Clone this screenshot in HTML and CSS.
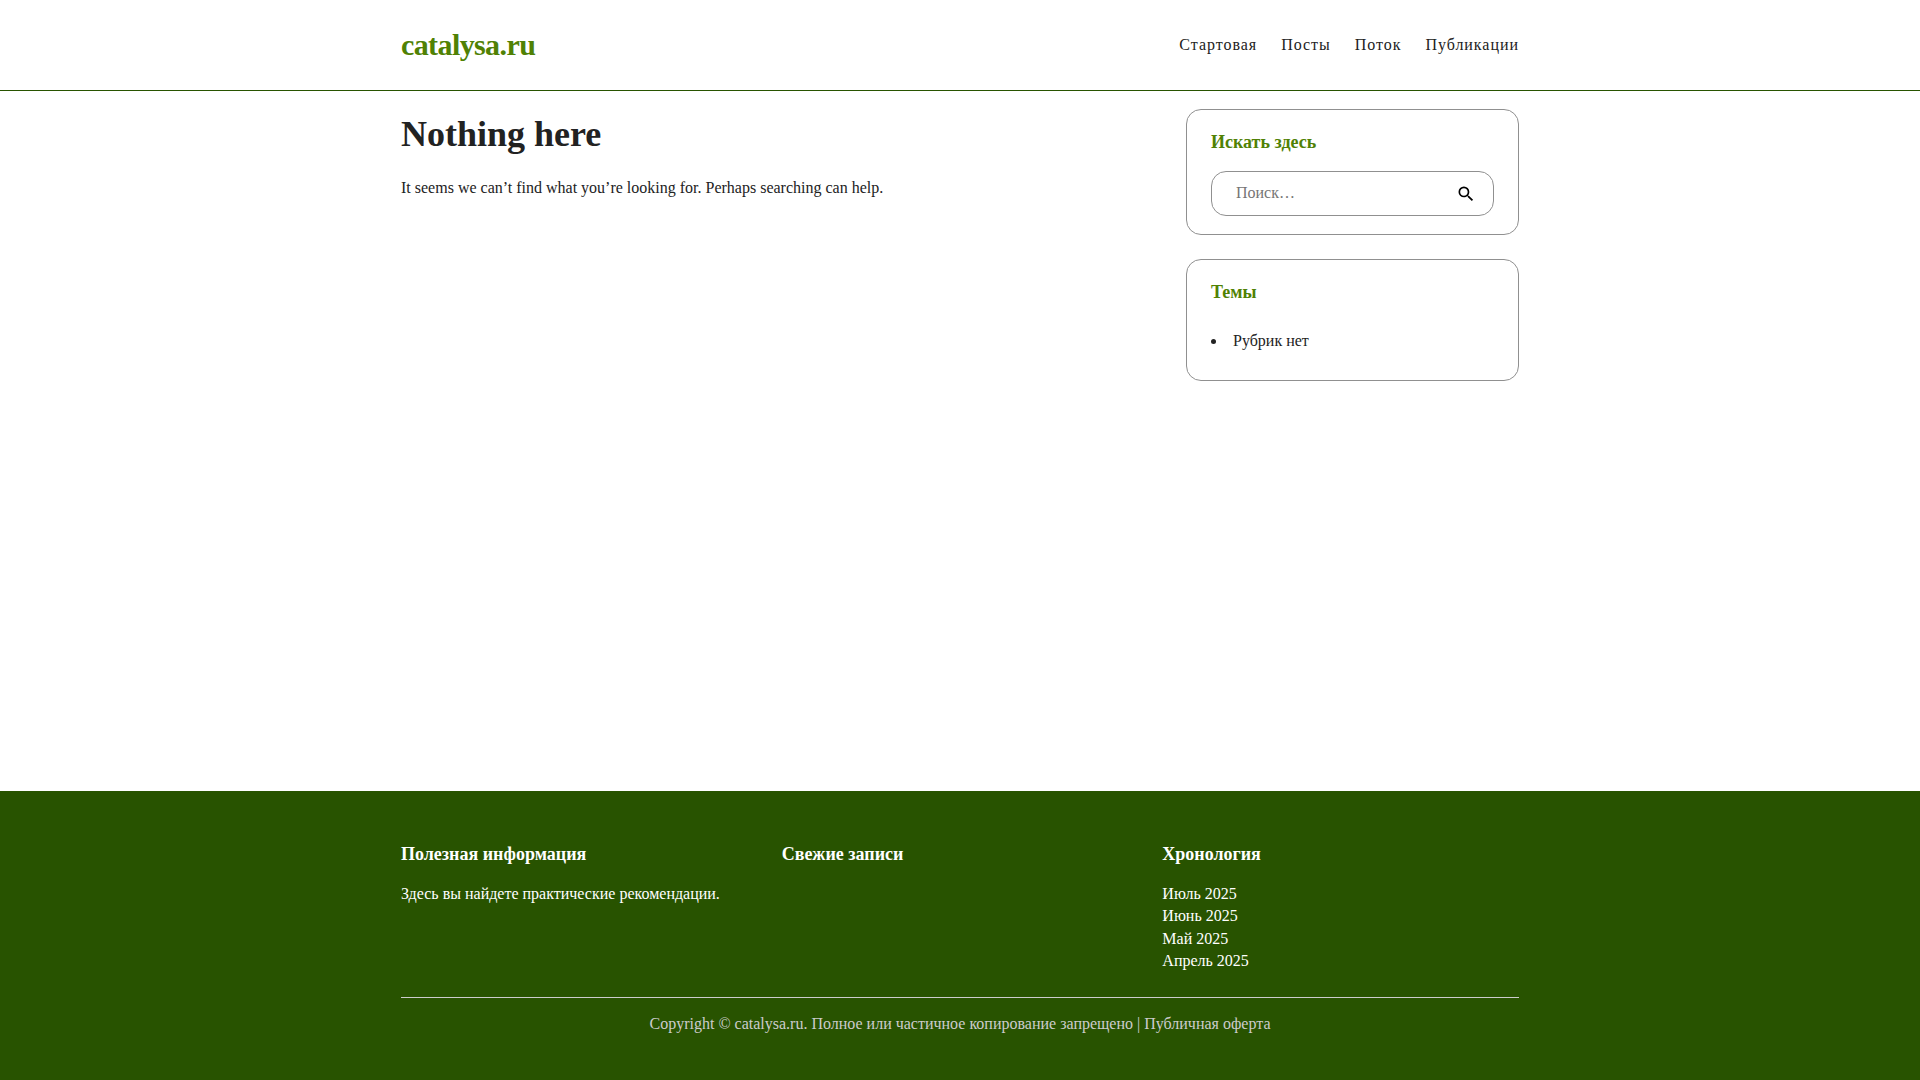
FILE: index.html
```html
<!DOCTYPE html>
<html lang="ru">

<head>
  <meta charset="UTF-8" />
  <meta name="viewport" content="width=device-width, initial-scale=1.0" />
  <link rel="stylesheet" href="styles.css">
  <title>catalysa.ru</title>
</head>

<body>
  <header class="header">
    <div class="container header-container">
      <a class="logo" href="/">catalysa.ru</a>
      <nav class="menu">
        <a href="/">Стартовая</a>
        <a href="/posts">Посты</a>
        <a href="/feed">Поток</a>
        <a href="/publications">Публикации</a>
      </nav>
    </div>
  </header>

  <div class="container content">
    <main class="main">
      <h1>Nothing here</h1>
      <p>It seems we can’t find what you’re looking for. Perhaps searching can help.</p>
    </main>

    <aside class="sidebar">
      <section class="widget">
        <h2><label for="search">Искать здесь</label></h2>
        <form class="search-form">
          <input class="search-field" id="search" name="s" type="text" placeholder="Поиск…" autocomplete="off" />
          <button class="search-submit" aria-label="Поиск">
            <svg width="20" height="20" viewBox="0 0 24 24">
              <path d="M15.5 14h-.79l-.28-.27A6.471 6.471 0 0 0 16 9.5 6.5 6.5 0 1 0 9.5 16c1.61 0 3.09-.59 4.23-1.57l.27.28v.79l5 4.99L20.49 19l-4.99-5zm-6 0C7.01 14 5 11.99 5 9.5S7.01 5 9.5 5 14 7.01 14 9.5 11.99 14 9.5 14z" />
            </svg>
          </button>
        </form>
      </section>

      <section class="widget">
        <h2>Темы</h2>
        <ul class="topics">
          <li>Рубрик нет</li>
        </ul>
      </section>
    </aside>
  </div>

  <footer class="footer">
    <div class="container">
      <div class="footer-columns">
        <section>
          <h2>Полезная информация</h2>
          <p>Здесь вы найдете практические рекомендации.</p>
        </section>
        <section>
          <h2>Свежие записи</h2>
        </section>
        <section>
          <h2>Хронология</h2>
          <ul class="archive">
            <li><a href="/2025/07">Июль 2025</a></li>
            <li><a href="/2025/06">Июнь 2025</a></li>
            <li><a href="/2025/05">Май 2025</a></li>
            <li><a href="/2025/04">Апрель 2025</a></li>
          </ul>
        </section>
      </div>
      <div class="copyright">
        Copyright © catalysa.ru. Полное или частичное копирование запрещено | <a href="/offer">Публичная оферта</a>
      </div>
    </div>
  </footer>
</body>

</html>
```

FILE: styles.css
```css
* {
  margin: 0;
  padding: 0;
  box-sizing: border-box;
}

body {
  display: flex;
  flex-direction: column;
  min-height: 100vh;
  font-family: "Liberation Serif", "Times New Roman", serif;
  font-size: 16px;
  line-height: 1.4;
  color: #222;
  background-color: #fff;
}

a {
  color: inherit;
  text-decoration: none;
}

h2 {
  font-size: 18px;
}

.container {
  width: 100%;
  max-width: 1166px;
  margin: 0 auto;
  padding: 0 24px;
}

.header {
  padding: 24px 0;
  border-bottom: 1px solid #285300;
}

.header-container {
  display: flex;
  flex-wrap: wrap;
  align-items: center;
  justify-content: space-between;
}

.logo {
  font-size: 30px;
  font-weight: bold;
  letter-spacing: -0.02em;
  color: #508104;
}

.menu {
  display: flex;
  flex-wrap: wrap;
  gap: 24px;
  letter-spacing: 0.06em;
}

.content {
  display: flex;
  flex: 1;
  gap: 24px;
  padding-top: 18px;
  padding-bottom: 24px;
}

.main {
  flex: 1;
}

.main h1 {
  margin-bottom: 18px;
  font-size: 36px;
}

.sidebar {
  display: flex;
  flex-direction: column;
  gap: 24px;
  width: 333px;
}

.widget {
  padding: 20px 24px 18px;
  border: 1px solid #909090;
  border-radius: 15px;
}

.widget h2 {
  margin-bottom: 16px;
  color: #508104;
}

.search-form {
  display: flex;
  align-items: center;
  height: 45px;
  padding: 0 17px 0 24px;
  border: 1px solid #909090;
  border-radius: 15px;
}

.search-field {
  flex: 1;
  min-width: 0;
  border: none;
  outline: 0;
  font: inherit;
  background: none;
}

.search-field::placeholder {
  color: #757575;
}

.search-submit {
  display: flex;
  border: none;
  background: none;
  cursor: pointer;
}

.topics {
  padding: 9px 0;
  list-style-position: inside;
}

.footer {
  padding: 51px 0 45px;
  color: #fff;
  background-color: #285300;
}

.footer-columns {
  display: grid;
  grid-template-columns: repeat(3, 1fr);
  gap: 24px;
  padding-bottom: 24px;
}

.footer h2 {
  margin-bottom: 16px;
}

.archive {
  list-style: none;
}

.copyright {
  padding-top: 15px;
  border-top: 1px solid #ccc;
  text-align: center;
  color: #ccc;
}
```
